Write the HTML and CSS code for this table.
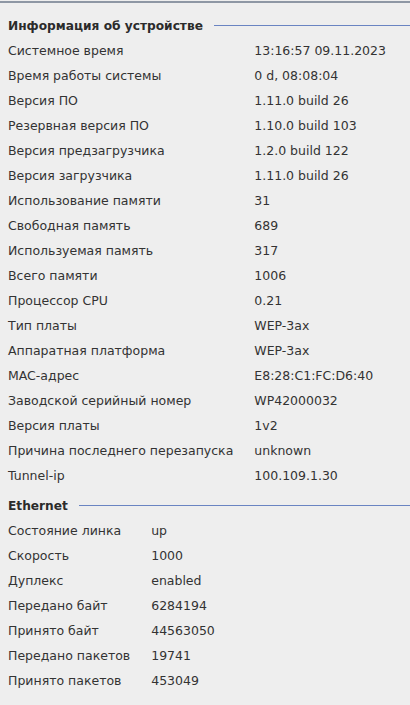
FILE: index.html
```html
<!DOCTYPE html>
<html lang="ru">
<head>
    <meta charset="UTF-8">
    <meta name="viewport" content="width=device-width, initial-scale=1.0">
    <title>Информация об устройстве</title>
    <link rel="stylesheet" href="styles.css">
</head>
<body>
    <div class="panel">
        <section class="group">
            <div class="group-title"><span>Информация об устройстве</span></div>
            <table class="info">
                <tr><td>Системное время</td><td>13:16:57 09.11.2023</td></tr>
                <tr><td>Время работы системы</td><td>0 d, 08:08:04</td></tr>
                <tr><td>Версия ПО</td><td>1.11.0 build 26</td></tr>
                <tr><td>Резервная версия ПО</td><td>1.10.0 build 103</td></tr>
                <tr><td>Версия предзагрузчика</td><td>1.2.0 build 122</td></tr>
                <tr><td>Версия загрузчика</td><td>1.11.0 build 26</td></tr>
                <tr><td>Использование памяти</td><td>31</td></tr>
                <tr><td>Свободная память</td><td>689</td></tr>
                <tr><td>Используемая память</td><td>317</td></tr>
                <tr><td>Всего памяти</td><td>1006</td></tr>
                <tr><td>Процессор CPU</td><td>0.21</td></tr>
                <tr><td>Тип платы</td><td>WEP-3ax</td></tr>
                <tr><td>Аппаратная платформа</td><td>WEP-3ax</td></tr>
                <tr><td>MAC-адрес</td><td>E8:28:C1:FC:D6:40</td></tr>
                <tr><td>Заводской серийный номер</td><td>WP42000032</td></tr>
                <tr><td>Версия платы</td><td>1v2</td></tr>
                <tr><td>Причина последнего перезапуска</td><td>unknown</td></tr>
                <tr><td>Tunnel-ip</td><td>100.109.1.30</td></tr>
            </table>
        </section>

        <section class="group">
            <div class="group-title"><span>Ethernet</span></div>
            <table class="info">
                <tr><td>Состояние линка</td><td>up</td></tr>
                <tr><td>Скорость</td><td>1000</td></tr>
                <tr><td>Дуплекс</td><td>enabled</td></tr>
                <tr><td>Передано байт</td><td>6284194</td></tr>
                <tr><td>Принято байт</td><td>44563050</td></tr>
                <tr><td>Передано пакетов</td><td>19741</td></tr>
                <tr><td>Принято пакетов</td><td>453049</td></tr>
            </table>
        </section>
    </div>
</body>
</html>
```

FILE: styles.css
```css
body {
    margin: 0;
    padding: 0;
    background-color: #eeeeee;
    font-family: 'DejaVu Sans', sans-serif;
    font-size: 12.5px;
    color: #333333;
}

.panel {
    margin-top: 1px;
    border-top: 2px solid #8e97a4;
    padding: 10px 0 0 8px;
}

.group {
    margin-bottom: 5px;
}

.group-title {
    display: flex;
    align-items: center;
    height: 25px;
    font-size: 12.2px;
    font-weight: bold;
    color: #2b2b2b;
}

.group-title::after {
    content: "";
    flex: 1;
    height: 1px;
    margin-left: 11px;
    background-color: #6a84c2;
}

.info {
    border-collapse: collapse;
}

.info td {
    height: 25px;
    padding: 0 21px 0 0;
    white-space: nowrap;
}
```
